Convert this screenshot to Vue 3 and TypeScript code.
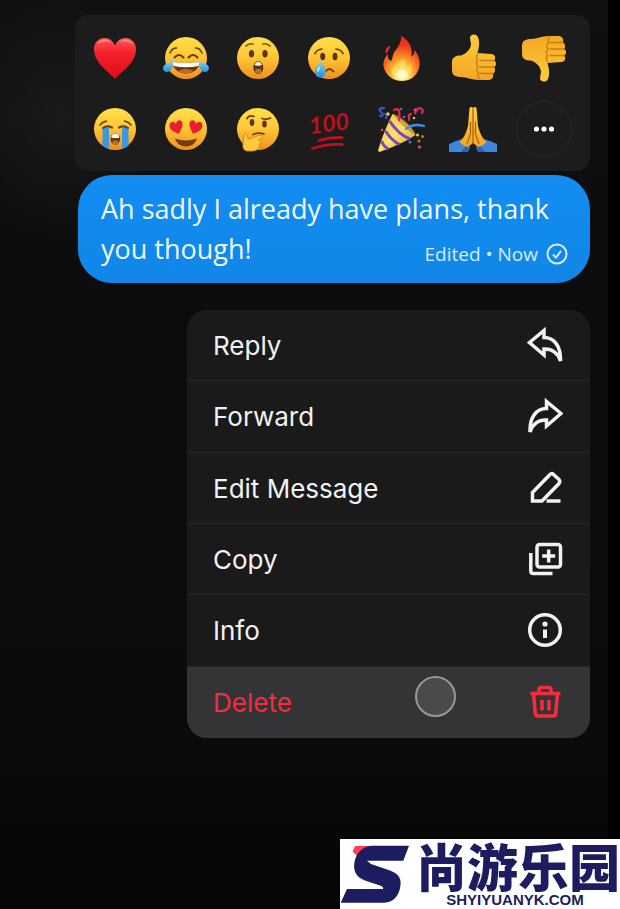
<script setup lang="ts">
import { ref } from 'vue'

type ActionId = 'reply' | 'forward' | 'edit' | 'copy' | 'info' | 'delete'

interface Action {
  id: ActionId
  label: string
}

const actions: Action[] = [
  { id: 'reply', label: 'Reply' },
  { id: 'forward', label: 'Forward' },
  { id: 'edit', label: 'Edit Message' },
  { id: 'copy', label: 'Copy' },
  { id: 'info', label: 'Info' },
  { id: 'delete', label: 'Delete' },
]

const active = ref<ActionId>('delete')
</script>

<template>
  <div class="screen">
    <!-- Shared paints for the emoji -->
    <svg class="paints" aria-hidden="true">
      <defs>
        <linearGradient id="face" x1="0" y1="0" x2="0" y2="1">
          <stop offset="0" stop-color="#ffe04a" />
          <stop offset="0.5" stop-color="#fdc534" />
          <stop offset="1" stop-color="#ef8f1c" />
        </linearGradient>
        <linearGradient id="hand" x1="0" y1="0" x2="0" y2="1">
          <stop offset="0" stop-color="#ffcb3c" />
          <stop offset="1" stop-color="#f3a723" />
        </linearGradient>
        <linearGradient id="heart" x1="0" y1="0" x2="0" y2="1">
          <stop offset="0" stop-color="#ff5a5a" />
          <stop offset="0.35" stop-color="#f5222d" />
          <stop offset="1" stop-color="#d90d16" />
        </linearGradient>
        <linearGradient id="tear" x1="0" y1="0" x2="0" y2="1">
          <stop offset="0" stop-color="#8fd8f8" />
          <stop offset="1" stop-color="#2492dc" />
        </linearGradient>
        <radialGradient id="flame" cx="0.5" cy="0.85" r="0.8">
          <stop offset="0" stop-color="#fffbd0" />
          <stop offset="0.25" stop-color="#ffd84a" />
          <stop offset="0.5" stop-color="#ff8a25" />
          <stop offset="0.8" stop-color="#ee3a20" />
          <stop offset="1" stop-color="#e02a24" />
        </radialGradient>
        <linearGradient id="cone" x1="0" y1="0" x2="1" y2="1">
          <stop offset="0" stop-color="#f2c230" />
          <stop offset="0.5" stop-color="#fbe26a" />
          <stop offset="1" stop-color="#d9981c" />
        </linearGradient>
      </defs>
    </svg>

    <main class="thread">
      <section class="reactions" aria-label="Reactions">
        <button type="button" aria-label="Red heart">
          <svg class="emoji" viewBox="0 0 48 48">
            <path fill="url(#heart)" d="M24 45C17 37 3 29 3 15 3 8 8 4 13.5 4 18.500 4 22 7 24 11.500 26 7 29.500 4 34.500 4 40 4 45 8 45 15 45 29 31 37 24 45Z" />
            <path fill="#ff9a96" opacity=".65" d="M6 10C8 5 17 4 20 8 15 7 10 8 6 10ZM28 8C32 4 40 5 42 10 38 8 33 7 28 8Z" />
          </svg>
        </button>

        <button type="button" aria-label="Tears of joy">
          <svg class="emoji" viewBox="0 0 48 48">
            <circle cx="24" cy="24" r="21" fill="url(#face)" />
            <g fill="none" stroke="#673c12" stroke-linecap="round">
              <path stroke-width="1.500" d="M8 19Q10 14 14.500 14M40 19Q38 14 33.500 14" />
              <path stroke-width="2" d="M12.500 23.500Q17 18.500 21.500 23.500M26.500 23.500Q31 18.500 35.500 23.500" />
            </g>
            <path fill="#6d3510" d="M10 28Q24 30 38 28C37 35 31 39.500 24 39.500S11 35 10 28Z" />
            <path fill="#fff" d="M10.500 28Q24 30 37.500 28L36.500 32Q24 34.500 11.500 32Z" />
            <path fill="#b96f23" d="M16 37Q24 33 32 37 24 42 16 37Z" />
            <path fill="url(#tear)" d="M11 26C11.500 31 10 38 5 38 0 38 0 32 4 30 7 28.500 9 28 11 26ZM37 26C36.500 31 38 38 43 38 48 38 48 32 44 30 41 28.500 39 28 37 26Z" />
          </svg>
        </button>

        <button type="button" aria-label="Astonished">
          <svg class="emoji" viewBox="0 0 48 48">
            <circle cx="24" cy="24" r="21" fill="url(#face)" />
            <path fill="none" stroke="#7a4a12" stroke-width="1.700" stroke-linecap="round" d="M12 12Q15 9 19 10M36 12Q33 9 29 10" />
            <g fill="#5a3413">
              <ellipse cx="17.500" cy="19.700" rx="2.600" ry="3.800" />
              <ellipse cx="31" cy="19.700" rx="2.600" ry="3.800" />
              <ellipse cx="24.300" cy="33.500" rx="5" ry="6.300" />
            </g>
            <path fill="#fff" d="M20.500 31Q21.500 28 24.300 28T28 31Q24 32.500 20.500 31Z" />
            <ellipse cx="24.300" cy="37" rx="3.200" ry="2.300" fill="#b5742c" />
          </svg>
        </button>

        <button type="button" aria-label="Crying">
          <svg class="emoji" viewBox="0 0 48 48">
            <circle cx="24" cy="24" r="21" fill="url(#face)" />
            <g fill="none" stroke="#6d4012" stroke-width="1.700" stroke-linecap="round">
              <path d="M10 19.500Q12 15.500 17 15M38 19.500Q36 15.500 31 15" />
              <path stroke-width="2" d="M20.500 37.500Q24.500 32.500 28.500 37.500" />
            </g>
            <ellipse cx="17.700" cy="22.500" rx="2.500" ry="3.700" fill="#5a3413" />
            <ellipse cx="30" cy="22.500" rx="2.500" ry="3.700" fill="#5a3413" />
            <path fill="url(#tear)" d="M15 26C17 31 21 34 20.500 38.500 20 42 18 43.500 15.200 43.500S10.500 42 10 38.500C9.500 34 13.500 31 15 26Z" />
            <path fill="#d6f3ff" d="M14.500 32C12.500 34 12 36 12.500 38.500 14 37 15 35 14.500 32Z" />
          </svg>
        </button>

        <button type="button" aria-label="Fire">
          <svg class="emoji" viewBox="0 0 48 48">
            <path fill="url(#flame)" d="M24.500 2C31 6 36 12 34.500 23 37 21 37.500 18 37.500 16 41 20 43.500 26 42.500 32 41 41 34 47 25 47S8 41 6.500 32C6 27 8 23 11 20 10.500 24 12 26 14 27 16 25 15 21 18 17 22 12 24 8 24.500 2Z" />
            <path fill="#e92d28" d="M13.500 11.500C9.500 13 7.500 16 9 20 11 17 12.500 15 13.500 11.500Z" />
            <path fill="#ffe36a" opacity=".6" d="M25 25C29 28 29 32 31 34 33 33 33 31 33 30 37 36 35 46 25 46S13 37 17 32C18 34 20 35 21 34 23 31 22 28 25 25Z" />
            <ellipse cx="25" cy="41" rx="6" ry="5" fill="#fffbd5" opacity=".8" />
          </svg>
        </button>

        <button type="button" aria-label="Thumbs up">
          <svg class="emoji" viewBox="0 0 48 48">
            <g id="thumb">
              <path fill="url(#hand)" d="M3 28C3 23 7 21.500 12 21.500 17 20 22 15 22 10L21 4C21 0 27-1 29 3 31 8 30 14 28.500 19L42 20C46 20 47.500 24 45 26.500 48 28 47.500 32 45 33 47 35 46 38.500 44 39.500 45 43 43 46 39 46H30C22 46 18 43 12 43 6 43 3 41 3 36Z" />
              <path fill="none" stroke="#c77d12" stroke-width="1.300" stroke-linecap="round" d="M45 26.500H31M45 33H31M44 39.500H31M29 20Q26 23 28.500 26.500 26 29 29 33 26.500 36 29.500 39.500 28 43 31 45" />
            </g>
          </svg>
        </button>

        <button type="button" aria-label="Thumbs down">
          <svg class="emoji" viewBox="0 0 48 48">
            <use href="#thumb" transform="translate(-1 48) scale(1 -1)" />
          </svg>
        </button>

        <button type="button" aria-label="Loudly crying">
          <svg class="emoji" viewBox="0 0 48 48">
            <circle cx="24" cy="24" r="21" fill="url(#face)" />
            <path fill="#3b98e4" d="M11.500 23H18V44Q14 42.500 11.500 40.500ZM31 23H37.500V40.500Q35 42.500 31 44Z" />
            <g fill="none" stroke="#673c12" stroke-linecap="round">
              <path stroke-width="1.500" d="M9 20Q11 17 15.500 16M40 20Q38 17 33.500 16" />
              <path stroke-width="2" d="M12 23Q16 20 21 22.500M28 22.500Q33 20 37 23" />
            </g>
            <ellipse cx="24.300" cy="34" rx="4.800" ry="5.800" fill="#6a3812" />
            <path fill="#fff" d="M20.500 31.500Q21.500 28.500 24.300 28.500T28 31.500V33H20.500Z" />
            <ellipse cx="24.300" cy="37.500" rx="3" ry="2" fill="#b56f2a" />
          </svg>
        </button>

        <button type="button" aria-label="Heart eyes">
          <svg class="emoji" viewBox="0 0 48 48">
            <circle cx="24" cy="24" r="21" fill="url(#face)" />
            <path fill="#e8202c" d="M17 29C12 27 7.500 25 7.500 20.500 7.500 16.500 12 15.500 14 19 14.500 14.500 20 14 20.500 18.500 21 22 18.500 25 17 29ZM31 29C36 27 40.500 25 40.500 20.500 40.500 16.500 36 15.500 34 19 33.500 14.500 28 14 27.500 18.500 27 22 29.500 25 31 29Z" />
            <path fill="#753c10" d="M13 33.500Q24 37.500 35 33.500C33.500 38.500 29 41.500 24 41.500S14.500 38.500 13 33.500Z" />
          </svg>
        </button>

        <button type="button" aria-label="Thinking">
          <svg class="emoji" viewBox="0 0 48 48">
            <circle cx="24" cy="24" r="21" fill="url(#face)" />
            <g fill="none" stroke="#6d4012" stroke-width="1.700" stroke-linecap="round">
              <path d="M13 13.500Q15 9.500 20 11.500M28 13.500Q32 15 36.500 13M19 29.500Q24 27 30 29" />
            </g>
            <ellipse cx="18" cy="17.500" rx="2.300" ry="3.400" fill="#5a3413" />
            <ellipse cx="30.500" cy="19" rx="2.300" ry="3.400" fill="#5a3413" />
            <path fill="#ffc83f" stroke="#d88a1a" stroke-width="1" stroke-linejoin="round" d="M10 29C12 27 13.500 29 14 34 19 33 24 30 27 30 29.500 30.500 29 33 24.500 34.500 27.500 36 27 38 25.500 39 26.500 41.500 24 46 18 46H14C10 46 8.500 43 9 39Z" />
          </svg>
        </button>

        <button type="button" aria-label="Hundred points">
          <svg class="emoji hundred" viewBox="0 0 48 48">
            <text x="5" y="29" transform="rotate(-7 5 29)">100</text>
            <path fill="none" stroke="#c50d1d" stroke-width="2.800" stroke-linecap="round" d="M14 35.500Q26 32 37 32.500M7.500 43.500Q22 38.500 37.500 39.500" />
          </svg>
        </button>

        <button type="button" aria-label="Party popper">
          <svg class="emoji" viewBox="0 0 48 48">
            <path fill="url(#cone)" d="M15.500 9C22 11 36 22 38.500 30 30 36 14 43 2.500 47 1 46.500 1 45 1.500 44 5 32 11 18 15.500 9Z" />
            <g fill="none" stroke="#7c43c8" stroke-width="3">
              <path d="M12.500 16Q22 30 33 34M8.500 26Q15 36 22.500 39.500M4.500 36Q7 42 11.500 44" />
            </g>
            <path fill="#a97018" opacity=".55" d="M16 9C24 10 37 22 38.500 30 32 27 20 16 16 9Z" />
            <g fill="none" stroke-width="2.300" stroke-linecap="round">
              <path stroke="#e02750" d="M17 5Q24 1 22 15M32 15V10L34 9M38 8Q41 2 44 3.500T45 8" />
              <path stroke="#3f8ee8" d="M29 24Q36 18 47 21" />
              <path stroke="#3558b8" d="M7 3Q0 3 4 7T3 11M8 9Q11 8 9 13" />
            </g>
            <g fill="#edcf45"><circle cx="11" cy="9" r="1.700" /><circle cx="37" cy="13" r="1.200" /><circle cx="40.500" cy="30" r="1.500" /></g>
            <g fill="#e5488e"><circle cx="38" cy="5" r="1.400" /><circle cx="5" cy="25" r="1.200" /><circle cx="42.500" cy="42" r="1.600" /></g>
            <g fill="#3978de"><circle cx="24" cy="4" r="1.300" /><circle cx="27" cy="12" r="1.300" /><circle cx="33" cy="37" r="1.500" /></g>
            <g fill="#d06e28"><circle cx="45.500" cy="31.500" r="1.500" /><circle cx="42" cy="36" r="1.500" /></g>
          </svg>
        </button>

        <button type="button" aria-label="Folded hands">
          <svg class="emoji" viewBox="0 0 48 48">
            <path fill="#3c86dc" d="M0 39Q6 36 13 34L21 42 19 47H0ZM48 39Q42 36 35 34L27 42 29 47H48Z" />
            <path fill="#2a63b4" d="M12 47Q15 42 20 40L19 47ZM36 47Q33 42 28 40L29 47Z" />
            <path fill="url(#hand)" d="M20.500 3C22 1.500 23.500 2 24 3.500 24.500 2 26 1.500 27.500 3L29 21C31 28 33 33 37.500 37 35 40 32 41 29 42L24 38 19 42C16 41 13 40 10.500 37 15 33 17 28 19 21Z" />
            <path fill="none" stroke="#ac6412" stroke-width="1.300" d="M24 3.500V38M21.500 17V29L18 39M26.500 17V29L30 39" />
          </svg>
        </button>

        <button type="button" class="more" aria-label="More reactions">
          <svg viewBox="0 0 24 8" aria-hidden="true">
            <circle cx="4.500" cy="4" r="2.600" />
            <circle cx="12" cy="4" r="2.600" />
            <circle cx="19.500" cy="4" r="2.600" />
          </svg>
        </button>
      </section>

      <article class="bubble">
        <span>Ah sadly I already have plans, thank you though!</span>
        <span class="meta">
          Edited • Now
          <svg viewBox="0 0 22 22" aria-hidden="true">
            <circle cx="11" cy="11" r="9.500" />
            <path d="M7 11.500L10 14.500 15 8" />
          </svg>
        </span>
      </article>

      <nav class="menu" aria-label="Message actions">
        <button
          v-for="action in actions"
          :key="action.id"
          type="button"
          class="item"
          :class="{ danger: action.id === 'delete', active: active === action.id }"
          @click="active = action.id"
        >
          <span class="label">{{ action.label }}</span>
          <svg class="icon" viewBox="0 0 36 36" stroke-width="3.500" aria-hidden="true">
            <path v-if="action.id === 'reply'" d="M2.500 15.500L17 3.500V10.500C27 10.500 34 19 33.500 34 31 26 25 21.500 17 22V28Z" />
            <path v-else-if="action.id === 'forward'" d="M34 15.500L19.500 3.500V10.500C9.500 10.500 2.500 19 3 34 5.500 26 11.500 21.500 19.500 22V28Z" />
            <g v-else-if="action.id === 'edit'">
              <path d="M5.500 31V22.500L22.500 5Q24.500 2.500 26.500 4.500L32 9.500Q33.500 11.500 32 13.500L15 31Z" />
              <path d="M19.500 31H33.500" />
            </g>
            <g v-else-if="action.id === 'copy'">
              <rect x="10" y="3.500" width="23.500" height="22.500" rx="2.500" />
              <path d="M21.700 8.500V21.500M15.200 15H28.200M3.800 12V30Q3.800 32.500 6.300 32.500H25.500" />
            </g>
            <g v-else-if="action.id === 'info'">
              <circle cx="18" cy="18" r="15.300" />
              <circle class="solid" cx="18" cy="12" r="2.600" />
              <path class="bar" d="M18 17.500V26" />
            </g>
            <g v-else>
              <path d="M3.500 9.500H33.500M12 9.500V6Q12 3.500 14.500 3.500H21.500Q24 3.500 24 6V9.500M6.500 9.500L8.300 29.500Q8.500 32 11 32H26Q28.500 32 28.700 29.500L30.500 9.500M15 16V26.500M22 16V26.500" />
            </g>
          </svg>
          <i v-if="action.id === 'delete'" class="touch"></i>
        </button>
      </nav>
    </main>

    <footer class="brand">
      <svg class="mark" viewBox="0 0 72 70" aria-hidden="true">
        <path fill="#fc4256" d="M15 7H31L17 17 12.500 12.500Z" />
        <path fill="#1c1c60" d="M69 6.700L63.300 21.700H27L31 25 50 31.500C58 34.500 61.500 39 60.500 46 59.500 56 54 63.700 44 63.700H.7L7 50H43Q44 48 40 46.500L25 41.500C16 38 13 32 14.500 23 16 14 23 6.700 33 6.700Z" />
      </svg>
      <div class="words">
        <strong>尚游乐园</strong>
        <small>SHYIYUANYK.COM</small>
      </div>
    </footer>
  </div>
</template>

<style>
body {
  margin: 0;
  background: #000;
}
</style>

<style scoped>
.screen {
  display: flex;
  flex-direction: column;
  box-sizing: border-box;
  min-height: 100vh;
  padding-top: 15px;
  overflow: hidden;
  background:
    linear-gradient(#000, #000) right / 12px 100% no-repeat,
    radial-gradient(110px 130px at 60px 115px, #1a1a1b, transparent),
    linear-gradient(#101010, #0c0c0c 35%, #0b0b0b 80%, #050505);
  font-family: Inter, "Noto Sans CJK SC", sans-serif;
}

.paints {
  position: absolute;
  width: 0;
  height: 0;
}

.thread {
  display: flex;
  flex-direction: column;
  padding: 0 30px 0 75px;
}

button {
  margin: 0;
  padding: 0;
  border: 0;
  background: none;
  color: inherit;
  font: inherit;
}

.reactions {
  display: grid;
  grid-template-columns: repeat(7, 1fr);
  grid-auto-rows: 71px;
  padding: 7px 10px 7px 4px;
  border-radius: 14px;
  background: #1c1c1c;
}

.reactions button {
  display: flex;
  align-items: center;
  justify-content: center;
}

.emoji {
  width: 48px;
  height: 48px;
}

.hundred {
  overflow: visible;
}

.hundred text {
  fill: #c50d1d;
  font: italic bold 23px Lato, sans-serif;
}

.reactions .more {
  place-self: center;
  box-sizing: border-box;
  width: 56px;
  height: 56px;
  border: 1px solid #282828;
  border-radius: 50%;
}

.more svg {
  width: 24px;
  height: 8px;
  fill: #fff;
}

.bubble {
  margin: 4px 0 0 3px;
  padding: 14px 22px 14px 23px;
  border-radius: 34px;
  background: linear-gradient(#128df2, #1087e8);
  color: #f0f8ff;
  font: 500 27px/40px "Open Sans", sans-serif;
}

.meta {
  display: flex;
  float: right;
  align-items: center;
  gap: 8px;
  margin-top: 11px;
  color: #d8edff;
  font-size: 19px;
  line-height: 28px;
}

.meta svg {
  width: 22px;
  height: 22px;
  fill: none;
  stroke: currentColor;
  stroke-width: 2;
}

.menu {
  display: grid;
  grid-auto-rows: 1fr;
  min-height: 428px;
  margin: 27px 0 0 112px;
  overflow: hidden;
  border-radius: 20px;
  background: #1a1a1a;
}

.item {
  position: relative;
  display: flex;
  align-items: center;
  justify-content: space-between;
  padding: 0 27px 0 26px;
  border-bottom: 1px solid #272727;
  color: #f2f2f2;
  font-size: 26px;
  line-height: 32px;
  text-align: left;
}

.item:last-child {
  border-bottom: 0;
}

.item.active {
  background: #343437;
}

.item.danger {
  color: #f42c3d;
}

.label {
  padding-top: 2px;
}

.icon {
  width: 36px;
  height: 36px;
  fill: none;
  stroke: currentColor;
}

.icon .solid {
  fill: currentColor;
  stroke: none;
}

.icon .bar {
  stroke-width: 4;
}

.touch {
  position: absolute;
  top: 9px;
  right: 134px;
  box-sizing: border-box;
  width: 41px;
  height: 41px;
  border: 2px solid #98989a;
  border-radius: 50%;
  background: #4a4a4c;
}

.brand {
  display: flex;
  align-self: flex-end;
  gap: 4px;
  margin-top: auto;
  background: #fff;
  color: #1c1c60;
}

.mark {
  width: 72px;
  height: 70px;
}

.words {
  display: flex;
  flex-direction: column;
  align-items: center;
}

.words strong {
  font: 900 51px/52px "Noto Sans CJK SC", sans-serif;
}

.words small {
  padding-right: 6px;
  font: bold 15px/18px "Liberation Sans", sans-serif;
}
</style>
